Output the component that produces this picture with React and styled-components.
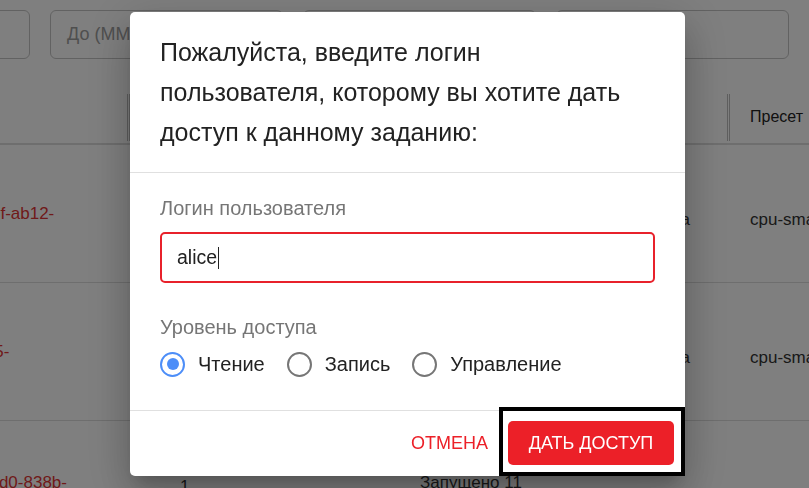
import React from "react";
import styled, { createGlobalStyle } from "styled-components";

const GlobalStyle = createGlobalStyle`
  html, body {
    margin: 0;
    padding: 0;
    background: #ffffff;
    overflow: hidden;
  }

  body {
    font-family: "Liberation Sans", Arial, sans-serif;
    width: 809px;
    height: 488px;
  }
`;

const Page = styled.div`
  width: 809px;
  height: 488px;
  overflow: hidden;
`;

const FilterRow = styled.div`
  display: flex;
  gap: 20px;
  padding-top: 10px;
  margin-left: -203px;
`;

const FilterInput = styled.div`
  box-sizing: border-box;
  width: 233px;
  height: 49px;
  flex-shrink: 0;
  border: 1px solid #c4c4c4;
  border-radius: 6px;
  display: flex;
  align-items: center;
  padding-left: 16px;
  color: #9e9e9e;
  font-size: 18px;
`;

const Table = styled.div`
  display: grid;
  grid-template-columns: 127px 290px 140px 170px 120px;
`;

const HeadCell = styled.div`
  position: relative;
  height: 86px;
  box-sizing: border-box;
  border-bottom: 2px solid #dcdcdc;
  display: flex;
  align-items: center;
  padding: 32px 0 0 23px;
  font-size: 16px;
  color: #222;

  &::before {
    content: "";
    display: ${(p) => (p.$sep ? "block" : "none")};
    position: absolute;
    left: 0;
    top: 35px;
    bottom: 2px;
    width: 3px;
    border-left: 3px double #bdbdbd;
    box-sizing: border-box;
  }
`;

const Cell = styled.div`
  height: 138px;
  box-sizing: border-box;
  border-bottom: 1px solid #dcdcdc;
  display: flex;
  align-items: ${(p) => (p.$top ? "flex-start" : "center")};
  padding-top: ${(p) => p.$pt || 0}px;
  justify-content: ${(p) => (p.$end ? "flex-end" : "flex-start")};
  padding-left: ${(p) => p.$pl || 0}px;
  padding-right: ${(p) => p.$pr || 0}px;
  font-size: 17px;
  color: ${(p) => (p.$link ? "#e03535" : "#333")};
  white-space: nowrap;
  overflow: hidden;
`;

const IdText = styled.span`
  margin-left: ${(p) => p.$cut}px;
`;

const Overlay = styled.div`
  position: fixed;
  inset: 0;
  background: rgba(0, 0, 0, 0.5);
  display: flex;
  align-items: center;
  justify-content: center;
  padding-left: 6px;
`;

const Dialog = styled.div`
  width: 555px;
  background: #ffffff;
  border-radius: 5px;
  box-shadow: 0 11px 15px -7px rgba(0, 0, 0, 0.2),
    0 24px 38px 3px rgba(0, 0, 0, 0.14), 0 9px 46px 8px rgba(0, 0, 0, 0.12);
  display: flex;
  flex-direction: column;
`;

const Title = styled.h2`
  margin: 0;
  padding: 20px 30px;
  font-size: 25px;
  font-weight: 400;
  line-height: 40px;
  color: #222;
  white-space: nowrap;
  border-bottom: 1px solid #e0e0e0;
`;

const Content = styled.div`
  padding: 24px 30px 32px;
  display: flex;
  flex-direction: column;
  border-bottom: 1px solid #e0e0e0;
`;

const Label = styled.div`
  font-size: 20px;
  line-height: 22px;
  color: #767676;
  margin-bottom: ${(p) => p.$mb}px;
  margin-top: ${(p) => p.$mt || 0}px;
`;

const LoginInput = styled.div`
  box-sizing: border-box;
  height: 51px;
  border: 2px solid #e8212b;
  border-radius: 5px;
  display: flex;
  align-items: center;
  padding-left: 15px;
  font-size: 19.5px;
  color: #222;
`;

const Caret = styled.span`
  display: inline-block;
  width: 1px;
  height: 22px;
  background: #222;
  margin-left: 1px;
`;

const RadioRow = styled.div`
  display: flex;
  align-items: center;
  height: 28px;
  gap: 22px;
`;

const RadioItem = styled.label`
  display: flex;
  align-items: center;
  gap: 13px;
  font-size: 20px;
  color: #222;
`;

const RadioCircle = styled.span`
  box-sizing: border-box;
  width: 25px;
  height: 25px;
  border-radius: 50%;
  border: 2.5px solid ${(p) => (p.$checked ? "#4d8ef8" : "#767676")};
  display: flex;
  align-items: center;
  justify-content: center;

  &::after {
    content: "";
    width: 12px;
    height: 12px;
    border-radius: 50%;
    background: ${(p) => (p.$checked ? "#4d8ef8" : "transparent")};
  }
`;

const Footer = styled.div`
  display: flex;
  justify-content: flex-end;
  align-items: center;
  gap: 20px;
  padding: 10px 11px 11px;
`;

const CancelButton = styled.button`
  border: none;
  background: none;
  padding: 0;
  font-family: inherit;
  font-size: 18px;
  color: #ec2028;
  text-transform: uppercase;
`;

const ActionWrap = styled.div`
  position: relative;

  &::after {
    content: "";
    position: absolute;
    left: -9px;
    right: -11px;
    top: -14px;
    bottom: -11px;
    border: 4px solid #000;
    box-sizing: border-box;
  }
`;

const GrantButton = styled.button`
  width: 166px;
  height: 44px;
  border: none;
  border-radius: 5px;
  background: #ec2028;
  color: #ffffff;
  font-family: inherit;
  font-size: 18px;
  text-transform: uppercase;
`;

const rows = [
  { id: "9c3f-ab12-", cut: -27, preset: "cpu-small", status: "Ожидана" },
  { id: "a915-", cut: -34, preset: "cpu-small", status: "Ожидана" },
  { id: "41d0-838b-", cut: -20, preset: "", status: "Запущено 11", num: "1" },
];

const App = () => {
  return (
    <>
      <GlobalStyle />
      <Page>
        <FilterRow>
          <FilterInput />
          <FilterInput>До (ММ/ДД/ГГГГ)</FilterInput>
          <FilterInput />
          <FilterInput />
        </FilterRow>
        <Table>
          <HeadCell />
          <HeadCell $sep />
          <HeadCell />
          <HeadCell />
          <HeadCell $sep>Пресет</HeadCell>
          {rows.map((r) =>
            r.num ? (
              <React.Fragment key={r.id}>
                <Cell $link $top $pt={52}>
                  <IdText $cut={r.cut}>{r.id}</IdText>
                </Cell>
                <Cell $top $pt={56} $pl={53}>{r.num}</Cell>
                <Cell $top $pt={52} $pl={3}>{r.status}</Cell>
                <Cell />
                <Cell />
              </React.Fragment>
            ) : (
              <React.Fragment key={r.id}>
                <Cell $link $pt={0}>
                  <IdText $cut={r.cut}>{r.id}</IdText>
                </Cell>
                <Cell />
                <Cell />
                <Cell $pt={12} $end $pr={37}>{r.status}</Cell>
                <Cell $pt={12} $pl={23}>{r.preset}</Cell>
              </React.Fragment>
            )
          )}
        </Table>
      </Page>
      <Overlay>
        <Dialog>
          <Title>
            Пожалуйста, введите логин
            <br />
            пользователя, которому вы хотите дать
            <br />
            доступ к данному заданию:
          </Title>
          <Content>
            <Label $mb={13}>Логин пользователя</Label>
            <LoginInput>
              alice
              <Caret />
            </LoginInput>
            <Label $mt={33} $mb={12}>
              Уровень доступа
            </Label>
            <RadioRow>
              <RadioItem>
                <RadioCircle $checked />
                Чтение
              </RadioItem>
              <RadioItem>
                <RadioCircle />
                Запись
              </RadioItem>
              <RadioItem>
                <RadioCircle />
                Управление
              </RadioItem>
            </RadioRow>
          </Content>
          <Footer>
            <CancelButton>Отмена</CancelButton>
            <ActionWrap>
              <GrantButton>Дать доступ</GrantButton>
            </ActionWrap>
          </Footer>
        </Dialog>
      </Overlay>
    </>
  );
};

export default App;
